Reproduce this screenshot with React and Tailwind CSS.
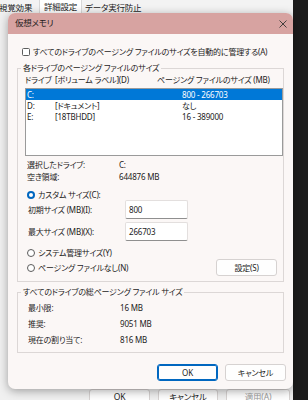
import React from 'react';

const font = "font-['Noto_Sans','Noto_Sans_CJK_JP',sans-serif] [font-feature-settings:'palt']";

const Radio = ({ checked }) =>
  checked ? (
    <span className="w-[8px] h-[8px] rounded-full bg-[#0067c0] flex items-center justify-center shrink-0">
      <span className="w-[4px] h-[4px] rounded-full bg-white" />
    </span>
  ) : (
    <span className="w-[8px] h-[8px] rounded-full border border-[#5c5c5c] bg-white shrink-0" />
  );

const Btn = ({ children, focused, className = '' }) => (
  <div
    className={`h-[17px] shrink-0 flex items-center justify-center rounded-[3px] bg-[#fefefe] border ${
      focused ? 'border-[#0067c0] shadow-[inset_0_0_0_1px_#0067c0]' : 'border-[#d6d2d1]'
    } ${className}`}
  >
    {children}
  </div>
);

const drives = [
  { letter: 'C:', label: '', size: '800 - 266703', selected: true },
  { letter: 'D:', label: '[ドキュメント]', size: 'なし' },
  { letter: 'E:', label: '[18TBHDD]', size: '16 - 389000' },
];

export default function App() {
  return (
    <div className={`w-[308px] h-[400px] overflow-hidden flex text-[8px] tracking-[-0.2px] text-[#1b1b1b] ${font}`}>
      {/* parent window (System Properties) */}
      <div className="w-[293px] flex flex-col bg-[#f0f0f0] shrink-0">
        {/* tabs */}
        <div className="h-[13px] shrink-0 flex text-[8.5px] leading-[12px] overflow-hidden bg-[#f3f3f3]">
          <span className="w-[40px] ml-[-1px] pt-[2px]">視覚効果</span>
          <span className="w-[43px] bg-white border-x border-[#d8d8d8] pt-[1px] text-center">詳細設定</span>
          <span className="pl-[3px] pt-[2px]">データ実行防止</span>
        </div>

        {/* 仮想メモリ dialog */}
        <div className="ml-[8px] w-[285px] shrink-0 rounded-[7px] overflow-hidden bg-[#fbf7f6] shadow-[0_2px_10px_rgba(0,0,0,0.35)] relative z-10">
          <div className="h-[21px] bg-[#d7a3a1] flex items-center justify-between pl-[7px] pr-[6px]">
            <span className="text-[8.5px]">仮想メモリ</span>
            <svg width="8" height="8" viewBox="0 0 8 8" className="text-[#333]">
              <path d="M0.5 0.5 L7.5 7.5 M7.5 0.5 L0.5 7.5" stroke="currentColor" strokeWidth="0.9" />
            </svg>
          </div>

          <div className="px-[9px] pb-[8px] flex flex-col">
            <div className="mt-[12px] h-[12px] flex items-center ml-[5px] gap-[3px]">
              <span className="w-[8px] h-[8px] rounded-[1.5px] border border-[#5d5d5d] bg-white shrink-0" />
              <span>すべてのドライブのページング ファイルのサイズを自動的に管理する(A)</span>
            </div>

            {/* group 1 */}
            <fieldset className="mt-[4px] border border-[#dcd7d6]">
              <legend className="ml-[3px] px-[2px] leading-[12px]">各ドライブのページング ファイルのサイズ</legend>
              <div className="flex flex-col pb-[5px]">
                <div className="h-[12px] flex items-center pl-[7px]">
                  <span className="w-[30px]">ドライブ</span>
                  <span className="w-[102px]">[ボリューム ラベル](D)</span>
                  <span>ページング ファイルのサイズ (MB)</span>
                </div>
                <div className="mt-[2px] ml-[7px] h-[68px] bg-white border border-[#9a9a9a]">
                  {drives.map((d) => (
                    <div
                      key={d.letter}
                      className={`h-[11px] flex items-center pl-[1px] ${
                        d.selected ? 'bg-[#0078d7] text-white' : ''
                      }`}
                    >
                      <span className="w-[28px]">{d.letter}</span>
                      <span className="w-[127px]">{d.label}</span>
                      <span>{d.size}</span>
                    </div>
                  ))}
                </div>

                <div className="mt-[3px] h-[12px] flex items-center pl-[9px]">
                  <span className="w-[92px]">選択したドライブ:</span>
                  <span>C:</span>
                </div>
                <div className="h-[12px] flex items-center pl-[9px]">
                  <span className="w-[92px]">空き領域:</span>
                  <span>644876 MB</span>
                </div>

                <div className="mt-[6px] h-[12px] flex items-center pl-[9px] gap-[3px]">
                  <Radio checked />
                  <span>カスタム サイズ(C):</span>
                </div>
                <div className="mt-[-1px] h-[19px] flex items-center pl-[10px]">
                  <span className="w-[97px]">初期サイズ (MB)(I):</span>
                  <div className="w-[63px] h-[19px] bg-white border border-[#e3dfde] border-b-[#8f8f8f] rounded-[2px] flex items-center pl-[3px]">
                    800
                  </div>
                </div>
                <div className="mt-[3px] h-[19px] flex items-center pl-[10px]">
                  <span className="w-[97px]">最大サイズ (MB)(X):</span>
                  <div className="w-[63px] h-[19px] bg-white border border-[#e3dfde] border-b-[#8f8f8f] rounded-[2px] flex items-center pl-[3px]">
                    266703
                  </div>
                </div>

                <div className="mt-[6px] h-[12px] flex items-center pl-[9px] gap-[3px]">
                  <Radio />
                  <span>システム管理サイズ(Y)</span>
                </div>
                <div className="h-[17px] flex items-center justify-between pl-[9px] pr-[6px]">
                  <div className="flex items-center gap-[3px]">
                    <Radio />
                    <span>ページング ファイルなし(N)</span>
                  </div>
                  <Btn className="w-[61px]">設定(S)</Btn>
                </div>
              </div>
            </fieldset>

            {/* group 2 */}
            <fieldset className="mt-[4px] border border-[#dcd7d6]">
              <legend className="ml-[3px] px-[2px] leading-[12px]">すべてのドライブの総ページング ファイル サイズ</legend>
              <div className="flex flex-col pt-[2px] pb-[4px] pl-[10px]">
                {[
                  ['最小限:', '16 MB'],
                  ['推奨:', '9051 MB'],
                  ['現在の割り当て:', '816 MB'],
                ].map(([k, v]) => (
                  <div key={k} className="h-[16px] flex items-center">
                    <span className="w-[92px]">{k}</span>
                    <span>{v}</span>
                  </div>
                ))}
              </div>
            </fieldset>

            <div className="mt-[11px] flex justify-end gap-[7px] mr-[-2px]">
              <Btn focused className="w-[61px]">OK</Btn>
              <Btn className="w-[61px]">キャンセル</Btn>
            </div>
          </div>
        </div>

        {/* parent dialog buttons */}
        <div className="flex shrink-0 ml-[89px] gap-[8px] text-[8.5px]">
          <Btn className="w-[61px] rounded-b-none">OK</Btn>
          <Btn className="w-[60px] rounded-b-none">キャンセル</Btn>
          <Btn className="w-[64px] rounded-b-none text-[#9b9b9b]">適用(A)</Btn>
        </div>
      </div>
      <div className="flex-1 bg-[#1c1c1c]" />
    </div>
  );
}
